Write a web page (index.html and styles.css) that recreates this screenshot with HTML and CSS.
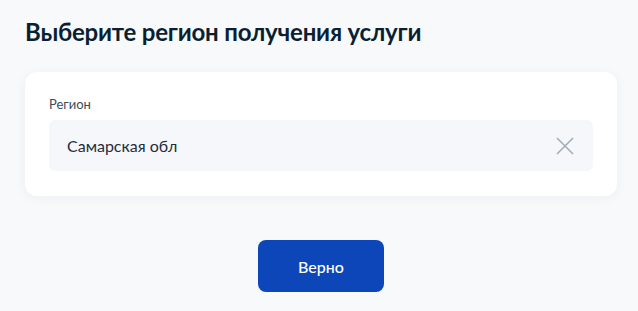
FILE: index.html
```html
<!DOCTYPE html>
<html lang="ru">
<head>
    <meta charset="UTF-8">
    <meta name="viewport" content="width=device-width, initial-scale=1.0">
    <title>Выбор региона</title>
    <link rel="stylesheet" href="styles.css">
</head>
<body>
    <div class="page">
        <h1 class="page-title">Выберите регион получения услуги</h1>

        <div class="card">
            <label class="field-label" for="region">Регион</label>
            <div class="field">
                <input type="text" class="field-input" id="region" value="Самарская обл">
                <button type="button" class="field-clear" aria-label="Очистить">
                    <svg width="20" height="20" viewBox="0 0 20 20">
                        <path d="M2 2L18 18M18 2L2 18" stroke="#a3acb8" stroke-width="1.6" fill="none"/>
                    </svg>
                </button>
            </div>
        </div>

        <div class="actions">
            <button type="button" class="btn-primary">Верно</button>
        </div>
    </div>
</body>
</html>
```

FILE: styles.css
```css
body {
    margin: 0;
    background-color: #f8f9fb;
    font-family: Lato, "Noto Sans", sans-serif;
    color: #0b1f33;
}

.page {
    padding: 16px 0 0 25px;
    width: 592px;
}

.page-title {
    margin: 0;
    font-size: 24px;
    font-weight: 700;
    line-height: 32px;
    letter-spacing: -0.2px;
}

.card {
    margin-top: 24px;
    background-color: #fff;
    border-radius: 12px;
    box-shadow: 0 2px 12px rgba(11, 31, 51, 0.05);
    padding: 24px 24px 25px 24px;
}

.field-label {
    display: block;
    font-size: 13px;
    line-height: 16px;
    color: #3b4c5c;
    margin-bottom: 8px;
}

.field {
    display: flex;
    align-items: center;
    height: 51px;
    background-color: #f5f7fa;
    border-radius: 6px;
}

.field-input {
    flex: 1;
    border: none;
    background: transparent;
    font-family: inherit;
    font-size: 16px;
    color: #1f2d3a;
    padding: 0 0 0 18px;
    outline: none;
}

.field-clear {
    border: none;
    background: transparent;
    padding: 0;
    margin-right: 18px;
    width: 20px;
    height: 20px;
    display: flex;
}

.actions {
    display: flex;
    justify-content: center;
    margin-top: 44px;
}

.btn-primary {
    width: 126px;
    height: 52px;
    border: none;
    border-radius: 8px;
    background-color: #0c46b8;
    color: #fff;
    font-family: inherit;
    font-size: 16px;
    font-weight: 500;
}
```
